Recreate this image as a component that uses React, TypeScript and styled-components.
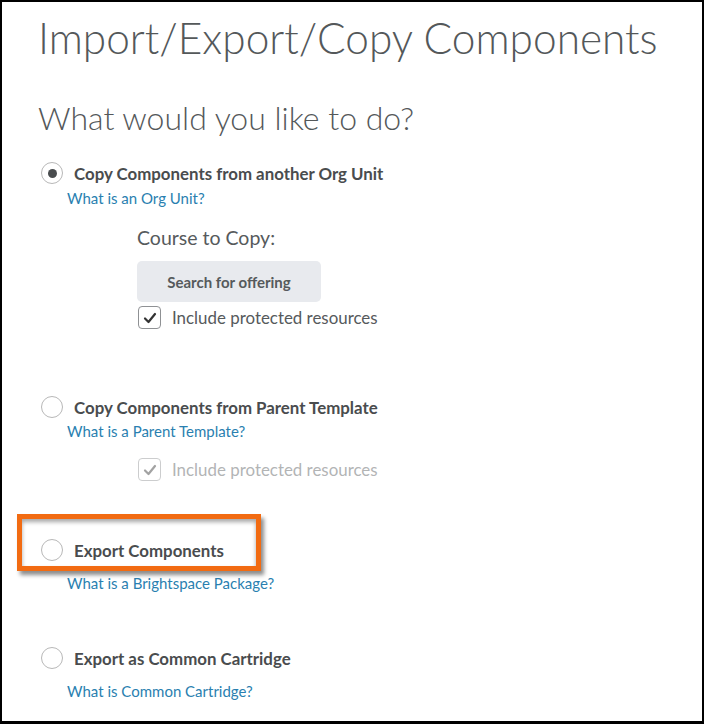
import React from "react";
import styled, { createGlobalStyle } from "styled-components";

const Global = createGlobalStyle`
  html, body { margin: 0; padding: 0; background: #fff; }
  body { font-family: Lato, "Open Sans", sans-serif; }
`;

const Frame = styled.div`
  width: 704px;
  height: 724px;
  box-sizing: border-box;
  border: 2px solid #000;
  border-bottom-width: 3px;
  background: #fff;
  overflow: hidden;
  padding: 10px 0 0 36px;
`;

const Title = styled.h1`
  margin: 0;
  font-family: Lato, sans-serif;
  font-weight: 300;
  font-size: 42.4px;
  line-height: 52px;
  color: #54585a;
  white-space: nowrap;
`;

const Subtitle = styled.h2`
  margin: 35px 0 0 0;
  font-family: Lato, sans-serif;
  font-weight: 300;
  font-size: 32px;
  line-height: 38px;
  color: #54585a;
`;

const Option = styled.div<{ $top: number }>`
  margin-top: ${(p) => p.$top}px;
  display: flex;
  flex-direction: column;
`;

const RadioRow = styled.label`
  position: relative;
  display: flex;
  align-items: center;
  gap: 11px;
  padding-left: 3px;
  height: 24px;
`;

const RadioCircle = styled.span<{ $checked?: boolean }>`
  width: 20px;
  height: 20px;
  border-radius: 50%;
  border: 1px solid #b8b8b8;
  background: #fff;
  display: flex;
  align-items: center;
  justify-content: center;
  flex: none;
  &::after {
    content: "";
    display: ${(p) => (p.$checked ? "block" : "none")};
    width: 9px;
    height: 9px;
    border-radius: 50%;
    background: #494c4e;
  }
`;

const RadioLabel = styled.span`
  font-family: Lato, sans-serif;
  font-weight: 700;
  font-size: 16.85px;
  color: #494c4e;
`;

const HelpLink = styled.a<{ $gap: number }>`
  margin-top: ${(p) => p.$gap}px;
  margin-left: 29px;
  font-family: Lato, sans-serif;
  font-size: 15px;
  color: #2a7fb0;
  text-decoration: none;
  line-height: 18px;
  align-self: flex-start;
`;

const Nested = styled.div`
  margin-left: 99px;
  display: flex;
  flex-direction: column;
  align-items: flex-start;
`;

const FieldLabel = styled.div`
  margin-top: 20px;
  font-family: Lato, sans-serif;
  font-size: 19.5px;
  line-height: 22px;
  color: #565a5c;
`;

const SearchButton = styled.button`
  margin-top: 12px;
  width: 184px;
  height: 41px;
  border: none;
  border-radius: 5px;
  background: #e8eaee;
  font-family: Lato, sans-serif;
  font-weight: 700;
  font-size: 15px;
  color: #565a5c;
  padding: 0;
`;

const CheckRow = styled.label<{ $disabled?: boolean; $top: number }>`
  margin-top: ${(p) => p.$top}px;
  display: flex;
  align-items: center;
  gap: 11px;
  margin-left: 1px;
  height: 23px;
  opacity: ${(p) => (p.$disabled ? 0.45 : 1)};
`;

const CheckBox = styled.span`
  width: 21px;
  height: 21px;
  border: 1px solid #8f9194;
  border-radius: 4px;
  background: #fff;
  display: flex;
  align-items: center;
  justify-content: center;
  flex: none;
`;

const CheckLabel = styled.span`
  font-family: Lato, sans-serif;
  font-size: 16.9px;
  color: #565a5c;
`;

const Highlight = styled.span`
  position: absolute;
  left: -21px;
  top: -24px;
  width: 244px;
  height: 57px;
  box-sizing: border-box;
  border: 5px solid #f26b12;
  box-shadow: 3px 4px 4px rgba(0, 0, 0, 0.45), inset 0 3px 4px rgba(0, 0, 0, 0.35);
  pointer-events: none;
`;

const Check = () => (
  <svg width="14" height="12" viewBox="0 0 14 12">
    <path d="M2 6.5 L5.5 10 L12 2" fill="none" stroke="#333" strokeWidth="2.2" strokeLinecap="round" strokeLinejoin="round" />
  </svg>
);

export default function App() {
  return (
    <>
      <Global />
      <Frame>
        <Title>Import/Export/Copy Components</Title>
        <Subtitle>What would you like to do?</Subtitle>

        <Option $top={24}>
          <RadioRow>
            <RadioCircle $checked />
            <RadioLabel>Copy Components from another Org Unit</RadioLabel>
          </RadioRow>
          <HelpLink $gap={4} href="#">What is an Org Unit?</HelpLink>
          <Nested>
            <FieldLabel>Course to Copy:</FieldLabel>
            <SearchButton>Search for offering</SearchButton>
            <CheckRow $top={4}>
              <CheckBox><Check /></CheckBox>
              <CheckLabel>Include protected resources</CheckLabel>
            </CheckRow>
          </Nested>
        </Option>

        <Option $top={66}>
          <RadioRow>
            <RadioCircle />
            <RadioLabel>Copy Components from Parent Template</RadioLabel>
          </RadioRow>
          <HelpLink $gap={3} href="#">What is a Parent Template?</HelpLink>
          <Nested>
            <CheckRow $disabled $top={18}>
              <CheckBox><Check /></CheckBox>
              <CheckLabel>Include protected resources</CheckLabel>
            </CheckRow>
          </Nested>
        </Option>

        <Option $top={57}>
          <RadioRow>
            <Highlight />
            <RadioCircle />
            <RadioLabel>Export Components</RadioLabel>
          </RadioRow>
          <HelpLink $gap={12} href="#">What is a Brightspace Package?</HelpLink>
        </Option>

        <Option $top={54}>
          <RadioRow>
            <RadioCircle />
            <RadioLabel>Export as Common Cartridge</RadioLabel>
          </RadioRow>
          <HelpLink $gap={12} href="#">What is Common Cartridge?</HelpLink>
        </Option>
      </Frame>
    </>
  );
}
